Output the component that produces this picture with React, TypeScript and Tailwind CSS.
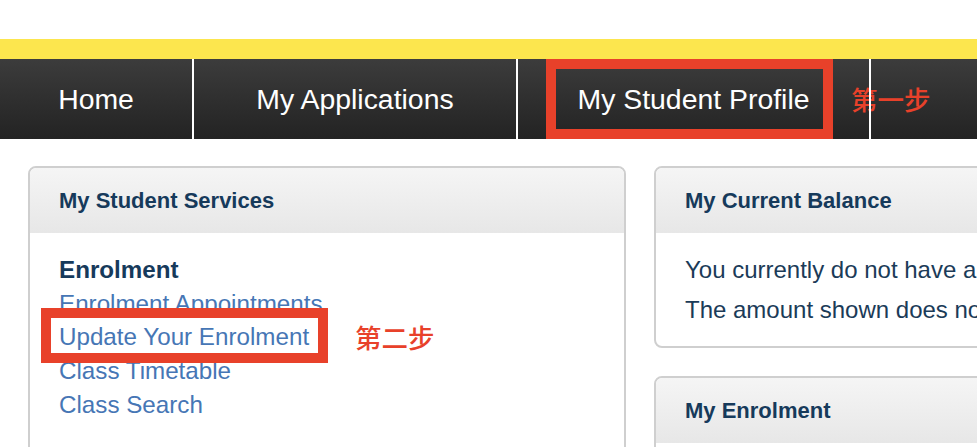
const sans = "font-['Liberation_Sans','Helvetica','Arial',sans-serif]";
const cjk = "font-['Noto_Sans_CJK_SC','Noto_Sans_CJK_JP',sans-serif]";

const NavItem: React.FC<{ label: string; width: string }> = ({ label, width }) => (
  <div
    className={`relative z-10 flex h-full shrink-0 items-center justify-center border-r-2 border-white text-[28.4px] text-white ${width}`}
  >
    {label}
  </div>
);

const Panel: React.FC<{ title: string; children?: React.ReactNode; className?: string }> = ({
  title,
  children,
  className = "",
}) => (
  <div className={`overflow-hidden rounded-lg border-2 border-[#cfcfcf] bg-white ${className}`}>
    <div className="flex h-[65px] items-center bg-gradient-to-b from-[#f5f5f5] to-[#e7e7e7] px-[29px] text-[22px] font-bold text-[#163a5b]">
      {title}
    </div>
    {children}
  </div>
);

export default function App() {
  return (
    <div className={`h-[447px] w-[977px] overflow-hidden bg-white ${sans}`}>
      <div className="h-[39px]" />
      <div className="h-[20px] bg-[#fce64e]" />

      <nav className="relative flex h-[80px] bg-gradient-to-b from-[#3c3c3c] to-[#232323]">
        <NavItem label="Home" width="w-[194px]" />
        <NavItem label="My Applications" width="w-[324px]" />
        <NavItem label="My Student Profile" width="w-[353px]" />
        <div className="flex-1" />

        {/* step annotations */}
        <div className="absolute left-[546px] top-0 z-20 h-[80px] w-[287px] border-[10px] border-[#e8412a]" />
        <div
          className={`absolute left-[851px] top-0 z-0 flex h-[80px] items-center text-[26.5px] font-medium leading-none text-[#e8412a] ${cjk}`}
        >
          第一步
        </div>
      </nav>

      <div className="flex gap-[28px] pl-[28px] pt-[27px]">
        <Panel title="My Student Services" className="h-[320px] w-[598px] shrink-0">
          <div className="px-[29px] pt-[20px] text-[24.2px] leading-[33.7px]">
            <div className="font-bold text-[#163a5b]">Enrolment</div>
            <div className="text-[#4676b5]">Enrolment Appointments</div>
            <div className="relative text-[#4676b5]">
              Update Your Enrolment
              <div className="absolute left-[-18px] top-[-12px] h-[55px] w-[287px] border-[10px] border-[#e8412a]" />
              <div
                className={`absolute left-[296px] top-0 flex h-full items-center text-[26.5px] font-medium leading-none text-[#e8412a] ${cjk}`}
              >
                第二步
              </div>
            </div>
            <div className="text-[#4676b5]">Class Timetable</div>
            <div className="text-[#4676b5]">Class Search</div>
          </div>
        </Panel>

        <div className="flex w-[598px] shrink-0 flex-col gap-[28px]">
          <Panel title="My Current Balance">
            <div className="whitespace-nowrap px-[29px] pb-[16px] pt-[17px] text-[24px] leading-[40px] text-[#1b3b58]">
              <div>You currently do not have an outstanding balance.</div>
              <div>The amount shown does not include pending charges.</div>
            </div>
          </Panel>
          <Panel title="My Enrolment" className="h-[120px]" />
        </div>
      </div>
    </div>
  );
}
